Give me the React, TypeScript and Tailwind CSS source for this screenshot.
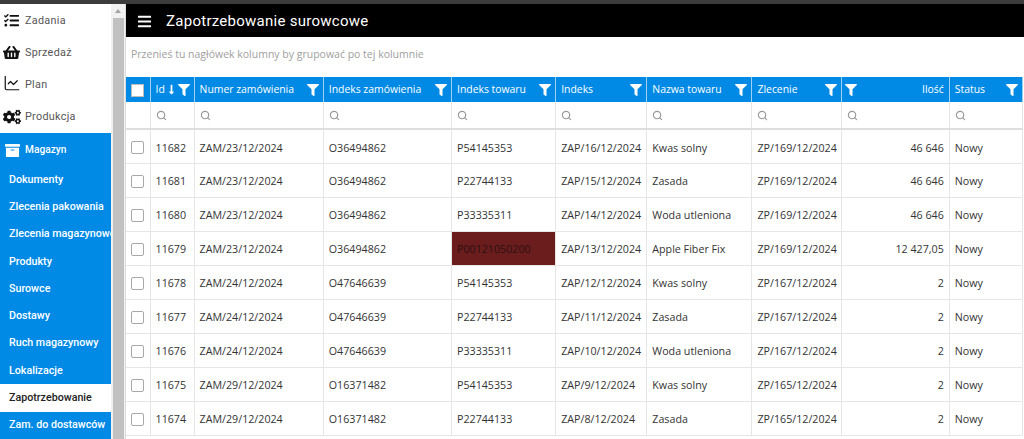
import { FaTasks, FaShoppingBasket, FaCogs, FaArchive, FaFilter, FaBars, FaLongArrowAltDown } from "react-icons/fa";
import { ChartLine, Search } from "lucide-react";

const columns = [
  { label: "Id", width: 44 },
  { label: "Numer zamówienia", width: 129 },
  { label: "Indeks zamówienia", width: 128 },
  { label: "Indeks towaru", width: 104 },
  { label: "Indeks", width: 91 },
  { label: "Nazwa towaru", width: 105 },
  { label: "Zlecenie", width: 89 },
  { label: "Ilość", width: 108 },
  { label: "Status", width: 73 },
];

const rows = [
  ["11682", "ZAM/23/12/2024", "O36494862", "P54145353", "ZAP/16/12/2024", "Kwas solny", "ZP/169/12/2024", "46 646", "Nowy"],
  ["11681", "ZAM/23/12/2024", "O36494862", "P22744133", "ZAP/15/12/2024", "Zasada", "ZP/169/12/2024", "46 646", "Nowy"],
  ["11680", "ZAM/23/12/2024", "O36494862", "P33335311", "ZAP/14/12/2024", "Woda utleniona", "ZP/169/12/2024", "46 646", "Nowy"],
  ["11679", "ZAM/23/12/2024", "O36494862", "P00121050200", "ZAP/13/12/2024", "Apple Fiber Fix", "ZP/169/12/2024", "12 427,05", "Nowy"],
  ["11678", "ZAM/24/12/2024", "O47646639", "P54145353", "ZAP/12/12/2024", "Kwas solny", "ZP/167/12/2024", "2", "Nowy"],
  ["11677", "ZAM/24/12/2024", "O47646639", "P22744133", "ZAP/11/12/2024", "Zasada", "ZP/167/12/2024", "2", "Nowy"],
  ["11676", "ZAM/24/12/2024", "O47646639", "P33335311", "ZAP/10/12/2024", "Woda utleniona", "ZP/167/12/2024", "2", "Nowy"],
  ["11675", "ZAM/29/12/2024", "O16371482", "P54145353", "ZAP/9/12/2024", "Kwas solny", "ZP/165/12/2024", "2", "Nowy"],
  ["11674", "ZAM/29/12/2024", "O16371482", "P22744133", "ZAP/8/12/2024", "Zasada", "ZP/165/12/2024", "2", "Nowy"],
];

const topItems = [
  { label: "Zadania", icon: <FaTasks size={15} /> },
  { label: "Sprzedaż", icon: <FaShoppingBasket size={17} /> },
  { label: "Plan", icon: <ChartLine size={18} strokeWidth={1.6} className="mb-[5px]" /> },
  { label: "Produkcja", icon: <FaCogs size={18} /> },
];

const subItems = ["Dokumenty", "Zlecenia pakowania", "Zlecenia magazynowe", "Produkty", "Surowce", "Dostawy", "Ruch magazynowy", "Lokalizacje", "Zapotrzebowanie", "Zam. do dostawców"];

export default function App() {
  return (
    <div className="h-[439px] w-[1024px] overflow-hidden bg-white flex flex-col font-['Roboto',sans-serif]">
      <div className="h-1 shrink-0 bg-[#3c3c3c]" />
      <div className="flex flex-1 min-h-0">
        {/* Sidebar */}
        <div className="w-[111px] shrink-0 overflow-hidden">
          <div>
            {topItems.map((item) => (
              <div key={item.label} className="h-[32.25px] flex items-center pl-[1px] pt-[1px] text-[10.8px] tracking-[0.3px] text-[#555]">
                <span className="w-[21px] flex justify-center text-[#111]">{item.icon}</span>
                <span className="ml-[3px]">{item.label}</span>
              </div>
            ))}
          </div>
          <div className="h-[306px] bg-[#008ae6] text-white">
            <div className="h-[33px] flex items-center pl-[5px] pt-[1px] text-[10.2px] font-medium">
              <FaArchive size={15} />
              <span className="ml-[5px]">Magazyn</span>
            </div>
            <div>
              {subItems.map((name) => (
                <div
                  key={name}
                  className={
                    name === "Zapotrzebowanie"
                      ? "h-[27.3px] pl-[9px] flex items-center text-[10.7px] font-medium whitespace-nowrap bg-white text-[#222]"
                      : "h-[27.3px] pl-[9px] flex items-center text-[10.7px] font-medium whitespace-nowrap"
                  }
                >
                  {name}
                </div>
              ))}
            </div>
          </div>
        </div>

        {/* Scrollbar */}
        <div className="w-[15px] shrink-0 flex flex-col items-center bg-[#f1f1f1] border-r border-[#dcdcdc]">
          <div className="h-[14px] flex items-center justify-center">
            <div className="w-0 h-0 border-x-[3px] border-x-transparent border-b-[4px] border-b-[#a3a3a3]" />
          </div>
          <div className="w-[11px] flex-1 bg-[#c1c1c1]" />
        </div>

        {/* Main */}
        <div className="flex-1 min-w-0 flex flex-col">
          <div className="h-[33px] shrink-0 bg-black flex items-center text-white pl-[11px] pt-[2px]">
            <FaBars size={15} />
            <span className="ml-[14px] text-[15px] tracking-[0.27px]">Zapotrzebowanie surowcowe</span>
          </div>
          <div className="h-[40px] shrink-0 flex items-center pl-[5px] pb-[4px] text-[10.5px] text-[#a0a0a0] font-['Open_Sans',sans-serif]">
            Przenieś tu nagłówek kolumny by grupować po tej kolumnie
          </div>
          <table className="table-fixed border-collapse w-[897px] font-['Open_Sans',sans-serif] text-[10.7px] text-[#333]">
            <colgroup>
              <col className="w-[24px]" />
              {columns.map((c) => (
                <col key={c.label} style={{ width: c.width }} />
              ))}
            </colgroup>
            <thead>
              <tr className="h-[25px] bg-[#008ae6] text-white text-[10.4px]">
                <th className="p-0 pt-[1px] border-r border-[#9fd0f2]">
                  <div className="mx-auto w-[13px] h-[13px] bg-white border border-[#bdbdbd]" />
                </th>
                {columns.map((c) => (
                  <th key={c.label} className="p-0 pt-[1px] font-normal border-r border-[#9fd0f2]">
                    {c.label === "Ilość" ? (
                      <div className="flex items-center justify-between pl-[3px] pr-[5px]">
                        <FaFilter size={12} />
                        <span>{c.label}</span>
                      </div>
                    ) : (
                      <div className="flex items-center pl-[5px] pr-[4px]">
                        <span className="flex-1 text-left whitespace-nowrap overflow-hidden">{c.label}</span>
                        {c.label === "Id" && <FaLongArrowAltDown size={11} className="mr-[1px]" />}
                        <FaFilter size={12} />
                      </div>
                    )}
                  </th>
                ))}
              </tr>
              <tr className="h-[27px] border-b-2 border-[#dedede]">
                <td className="p-0 border-r border-[#e6e6e6]" />
                {columns.map((c) => (
                  <td key={c.label} className="p-0 pl-[5px] pt-[1px] border-r border-[#e6e6e6]">
                    <Search size={11} strokeWidth={2.5} className="text-[#999]" />
                  </td>
                ))}
              </tr>
            </thead>
            <tbody>
              {rows.map((row) => (
                <tr key={row[0]} className="h-[34px] border-b border-[#e6e6e6]">
                  <td className="p-0 pt-[3px] border-r border-[#e6e6e6]">
                    <div className="mx-auto w-[13px] h-[13px] rounded-[2px] border border-[#a8a8a8] bg-white" />
                  </td>
                  {row.map((value, i) => (
                    <td
                      key={i}
                      className={
                        value === "P00121050200"
                          ? "p-0 px-[5px] pt-[3px] whitespace-nowrap border-r border-[#e6e6e6] bg-[#6b1d1d] text-[#2a1010]"
                          : i === 7
                            ? "p-0 px-[5px] pt-[3px] text-right whitespace-nowrap border-r border-[#e6e6e6]"
                            : "p-0 px-[5px] pt-[3px] whitespace-nowrap border-r border-[#e6e6e6]"
                      }
                    >
                      {value}
                    </td>
                  ))}
                </tr>
              ))}
            </tbody>
          </table>
        </div>
      </div>
    </div>
  );
}
